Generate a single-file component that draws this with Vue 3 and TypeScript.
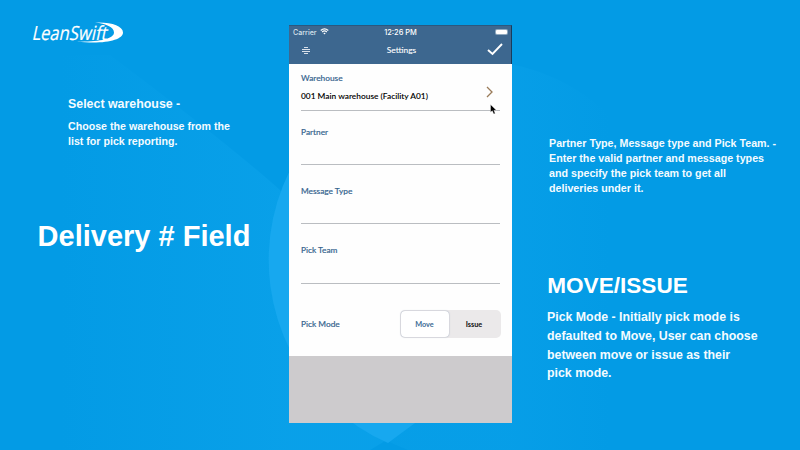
<script setup lang="ts">
import { ref } from 'vue'

const fields: string[] = ['Partner', 'Message Type', 'Pick Team']
const modes: string[] = ['Move', 'Issue']
const mode = ref<string>('Move')
</script>

<template>
  <main class="stage">
    <svg class="backdrop" viewBox="0 0 800 450" aria-hidden="true">
      <defs>
        <linearGradient id="petal" gradientUnits="userSpaceOnUse" x1="60" x2="290" y1="0" y2="0">
          <stop offset="0" stop-color="#0ba2ea" stop-opacity="0" />
          <stop offset="1" stop-color="#0ba2ea" stop-opacity=".75" />
        </linearGradient>
        <linearGradient id="petalRight" gradientUnits="userSpaceOnUse" x1="512" x2="610" y1="0" y2="0">
          <stop offset="0" stop-color="#0ba2ea" stop-opacity=".45" />
          <stop offset="1" stop-color="#0ba2ea" stop-opacity="0" />
        </linearGradient>
      </defs>
      <path d="M110 55Q230 145 281 191L415 423L370 450H60V55Z" fill="url(#petal)" />
      <path d="M469 60Q560 60 625 130V450H408Q380 439 355 423Z" fill="url(#petalRight)" />
      <path d="M469 60A200 200 0 0 0 388 443L415 423Z" fill="#17a8ef" />
    </svg>

    <section class="left">
      <svg class="logo" viewBox="0 0 94 24" role="img" aria-label="LeanSwift">
        <text x="4.4" y="18.8" transform="skewX(-12)" textLength="75" lengthAdjust="spacingAndGlyphs">LeanSwift</text>
        <path d="M64 1.6C80 .8 92 5 92 11.5C92 19.5 72 23.5 46 20.6C68 21 83 18 83 11.5C83 6 75 3 64 1.6Z" />
      </svg>
      <div class="note">
        <h2>Select warehouse -</h2>
        <p>Choose the warehouse from the<br />list for pick reporting.</p>
      </div>
      <h1>Delivery # Field</h1>
    </section>

    <section class="phone">
      <header>
        <div class="status">
          <span class="carrier">Carrier
            <svg viewBox="0 0 10 8"><path d="M.7 2.8Q5-1 9.3 2.8M2.3 4.6Q5 2.2 7.7 4.6" /><path class="dot" d="M3.6 5.8Q5 4.8 6.4 5.8L5 7.5Z" /></svg>
          </span>
          <span class="time">12:26 PM</span>
          <span class="battery"><i></i></span>
        </div>
        <div class="bar">
          <svg class="menu" viewBox="0 0 8 8"><path d="M2 1.5H6M0 3.5H8M0 5.5H8M2 7.5H6" /></svg>
          <span>Settings</span>
          <svg class="check" viewBox="0 0 16 13"><path d="M1 7L5.5 11L15 1" /></svg>
        </div>
      </header>
      <div class="form">
        <div class="field warehouse">
          <label>Warehouse</label>
          <div class="value">
            <span>001 Main warehouse (Facility A01)</span>
            <svg viewBox="0 0 7 12"><path d="M1 1L6 6L1 11" /></svg>
          </div>
        </div>
        <div v-for="f in fields" :key="f" class="field"><label>{{ f }}</label></div>
        <div class="mode">
          <label>Pick Mode</label>
          <div class="toggle">
            <button v-for="m in modes" :key="m" :class="{ active: mode === m }" @click="mode = m">{{ m }}</button>
          </div>
        </div>
      </div>
      <svg class="cursor" viewBox="0 0 7 11"><path d="M.5.5V8.3L2.3 6.8L3.7 10L5.2 9.4L3.9 6.3H6.4Z" /></svg>
    </section>

    <section class="right">
      <p class="types">Partner Type, Message type and Pick Team. -<br />Enter the valid partner and message types<br />and specify the pick team to get all<br />deliveries under it.</p>
      <h2>MOVE/ISSUE</h2>
      <p class="pick">Pick Mode - Initially pick mode is<br />defaulted to Move, User can choose<br />between move or issue as their<br />pick mode.</p>
    </section>
  </main>
</template>

<style>
body { margin: 0; background: #039be5; }
</style>

<style scoped>
* { box-sizing: border-box; }
h1, h2, p { margin: 0; font-weight: 700; white-space: nowrap; }
svg { display: block; }
.stage {
  position: relative;
  display: grid;
  grid-template-columns: 289px 223px 1fr;
  width: 800px;
  height: 450px;
  overflow: hidden;
  background: #039be5;
  color: #f4fbff;
  font-family: "Liberation Sans", Arial, sans-serif;
}
.backdrop { position: absolute; inset: 0; width: 800px; height: 450px; }
.left, .right, .phone { position: relative; }
.left { padding-top: 21px; }
.logo { width: 94px; height: 24px; margin-left: 31px; fill: #fff; overflow: visible; }
.logo text { font: 400 19.5px "Open Sans", sans-serif; font-variant-ligatures: none; stroke: #fff; stroke-width: .2; }
.note { padding: 51px 0 0 68px; }
.note h2 { font-size: 12.4px; line-height: 16px; }
.note p { margin-top: 7px; font-size: 10.65px; line-height: 15px; }
h1 { margin: 69px 0 0 37.6px; font-size: 29px; line-height: 36px; color: #fff; }
.right { padding: 136px 0 0 36px; }
.types { padding-left: 1px; font-size: 10.7px; line-height: 15px; }
.right h2 { margin: 76px 0 0 -.8px; font-size: 22.6px; line-height: 28px; color: #fff; }
.pick { margin: 8px 0 0 -1px; font-size: 12.35px; line-height: 18.8px; }
.phone {
  height: 398px;
  margin-top: 25px;
  background: #cdcbcd;
  font-family: Lato, sans-serif;
}
header {
  height: 38.5px;
  background: #3d678f;
  border-top: 1px solid #2c587f;
  border-right: 1px solid #183c5c;
  color: #fff;
}
.status {
  display: grid;
  grid-template-columns: 1fr auto 1fr;
  align-items: center;
  height: 12px;
  padding: 0 3px 0 4px;
  font: 500 7.4px Inter, sans-serif;
}
.carrier { display: flex; align-items: center; gap: 3px; color: #d7e2ec; font-size: 7.1px; }
.carrier svg { width: 9px; height: 7px; margin-top: -1px; fill: none; stroke: #fff; stroke-width: 1.4; }
.carrier .dot { fill: #fff; stroke: none; }
.time { font-weight: 500; }
.battery { justify-self: end; width: 13px; height: 6px; margin-top: -1px; padding: 1px; border-radius: 2px; background: #8ea9c0; }
.battery i { display: block; height: 4px; border-radius: 1px; background: #fff; }
.bar {
  display: grid;
  grid-template-columns: 1fr auto 1fr;
  align-items: center;
  height: 26px;
  margin-top: -1px;
  padding: 0 8px 0 13px;
  font-size: 8.4px;
}
.bar span { padding-right: 2px; -webkit-text-stroke: .1px #fff; }
.menu { width: 8px; height: 8px; margin-top: -1px; fill: none; stroke: #fff; stroke-opacity: .8; stroke-width: 1; }
.check { justify-self: end; width: 16px; height: 13px; margin-top: -1px; fill: none; stroke: #fff; stroke-width: 1.9; }
.form { height: 292px; padding: 0 12px; background: #fefefe; }
label { font-size: 8.3px; font-weight: 500; line-height: 10px; color: #37658f; -webkit-text-stroke: .15px #37658f; }
.field { height: 59.5px; padding-top: 21px; border-bottom: 1px solid #babdc1; display: flex; flex-direction: column; }
.field.warehouse { height: 47.5px; padding-top: 9.5px; }
.warehouse + .field { height: 53.5px; padding-top: 15.5px; }
.value { display: flex; justify-content: space-between; padding-right: 7px; color: #000; font-weight: 600; font-size: 8.35px; line-height: 10px; margin-top: 8px; }
.value svg { width: 7px; height: 12px; margin-top: -5px; fill: none; stroke: #9a7b59; stroke-width: 1.3; }
.mode { display: flex; align-items: center; justify-content: space-between; padding-top: 26.5px; }
.toggle { display: flex; width: 101px; height: 28px; padding: 1px; border-radius: 5px; margin-right: -.5px; background: #ebe9ea; }
button { flex: 1; border: 0; padding: 0; border-radius: 4px; background: none; color: #111; font: 700 7.3px Lato, sans-serif; }
button.active { flex: 0 0 48px; background: #fff; color: #3d6c96; box-shadow: 0 0 1.5px #8794ac; }
.cursor { position: absolute; left: 201px; top: 79px; width: 7px; height: 11px; stroke: #fff; stroke-width: .4; }
</style>
